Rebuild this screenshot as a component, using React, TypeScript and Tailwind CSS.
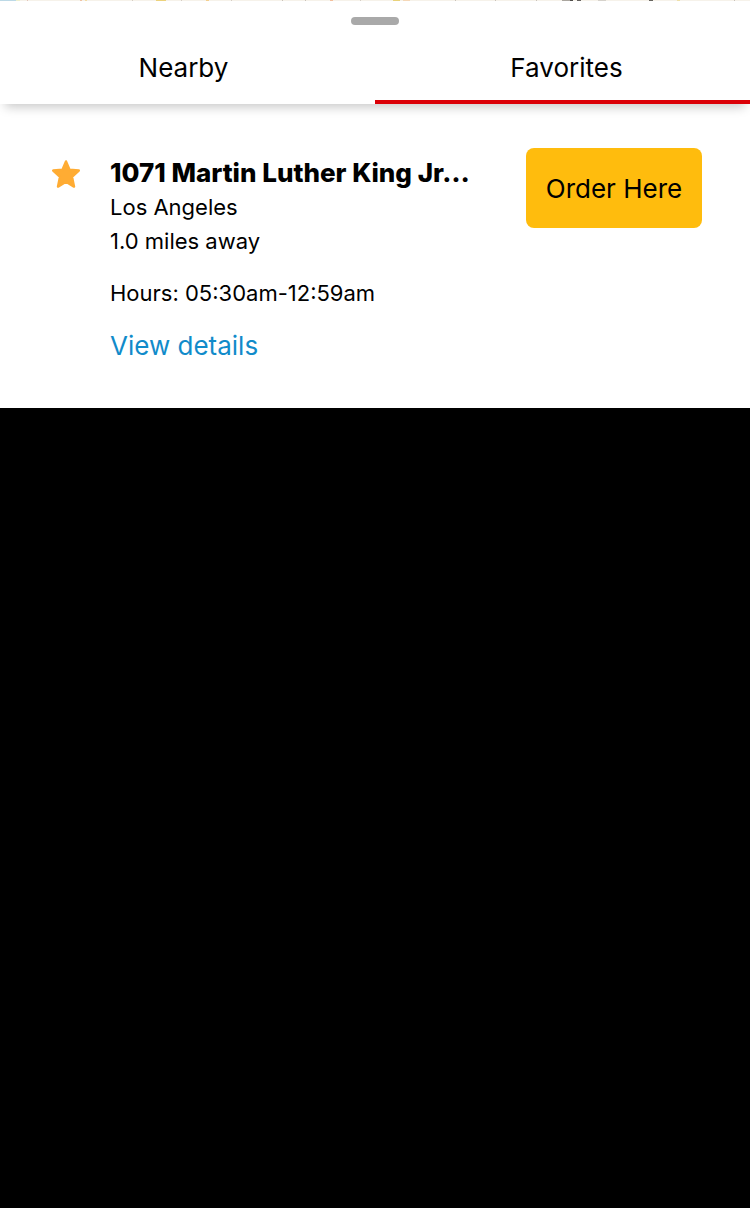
const mapMarks = [
  { x: 0, w: 16, fill: "#bcd9e6" },
  { x: 16, w: 4, fill: "#eef0cf" },
  { x: 27, w: 1, fill: "#e3c3b8" },
  { x: 80, w: 2, fill: "#f0c3a4" },
  { x: 85, w: 2, fill: "#f3dca6" },
  { x: 132, w: 1, fill: "#d5cdc4" },
  { x: 156, w: 10, fill: "#ecd27c" },
  { x: 181, w: 1, fill: "#d5cdc4" },
  { x: 206, w: 3, fill: "#f4cf8e" },
  { x: 231, w: 1, fill: "#d5cdc4" },
  { x: 282, w: 1, fill: "#c9c2ba" },
  { x: 305, w: 1, fill: "#c9c2ba" },
  { x: 330, w: 3, fill: "#f3bf9d" },
  { x: 360, w: 1, fill: "#d5cdc4" },
  { x: 393, w: 7, fill: "#e9d27a" },
  { x: 403, w: 7, fill: "#f5d8b8" },
  { x: 455, w: 1, fill: "#c9c2ba" },
  { x: 495, w: 1, fill: "#c9c2ba" },
  { x: 536, w: 1, fill: "#c9c2ba" },
  { x: 562, w: 8, fill: "#aaa69f" },
  { x: 570, w: 3, fill: "#4f4d4a" },
  { x: 577, w: 4, fill: "#65625f" },
  { x: 598, w: 8, fill: "#d6d2cb" },
  { x: 649, w: 4, fill: "#67645f" },
  { x: 677, w: 3, fill: "#eee0a8" },
  { x: 734, w: 1, fill: "#c9c2ba" },
];

function MapEdge() {
  return (
    <svg className="block h-px w-full" viewBox="0 0 750 1" preserveAspectRatio="none" aria-hidden="true">
      <rect width="750" height="1" fill="#f6f2ea" />
      {mapMarks.map((m) => (
        <rect key={m.x} x={m.x} width={m.w} height="1" fill={m.fill} />
      ))}
    </svg>
  );
}

function Star() {
  return (
    <svg className="block size-7" viewBox="0 0 28 28" aria-hidden="true">
      <path
        d="M14 1.4 L17.5 9.7 L26.8 10.5 L20 16.8 L22 26.6 L14 21.8 L6 26.6 L8 16.8 L1.2 10.5 L10.5 9.7 Z"
        fill="#ffac33"
        stroke="#ffac33"
        strokeWidth="2.4"
        strokeLinejoin="round"
      />
    </svg>
  );
}

function Tab({ label, selected }: { label: string; selected: boolean }) {
  return (
    <button
      type="button"
      role="tab"
      aria-selected={selected}
      className={
        selected
          ? "flex-1 border-b-4 border-[#db0007] pt-[14px] pb-[14px] pl-2 text-[26px] leading-9"
          : "flex-1 border-b-4 border-transparent pt-[14px] pb-[14px] pr-2 text-[26px] leading-9"
      }
    >
      {label}
    </button>
  );
}

export default function App() {
  return (
    <div className="min-h-screen bg-black font-[Inter,sans-serif] text-black">
      <MapEdge />
      <main className="bg-white">
        <header className="relative bg-white pt-4 shadow-[0_8px_10px_-5px_rgba(0,0,0,0.22)]">
          <div className="mx-auto mb-[11px] h-2 w-12 rounded-full bg-[#a9a9a9]" />
          <div role="tablist" className="flex">
            <Tab label="Nearby" selected={false} />
            <Tab label="Favorites" selected />
          </div>
        </header>

        <article className="flex items-start px-12 pt-11 pb-11">
          <div className="mr-[30px] ml-1 pt-3">
            <Star />
          </div>
          <div className="min-w-0 flex-1 pt-2">
            <h2 className="whitespace-nowrap text-[26px] leading-[34px] font-extrabold">
              1071 Martin Luther King Jr…
            </h2>
            <p className="text-[22px] leading-[34px]">Los Angeles</p>
            <p className="text-[22px] leading-[34px]">1.0 miles away</p>
            <p className="mt-[18px] text-[22px] leading-[34px]">Hours: 05:30am-12:59am</p>
            <a href="#details" className="mt-[18px] block w-fit text-[26px] leading-9 text-[#118bca]">
              View details
            </a>
          </div>
          <button
            type="button"
            className="h-20 w-44 shrink-0 rounded-lg bg-[#ffbc0d] pt-0.5 text-[26px] leading-9"
          >
            Order Here
          </button>
        </article>
      </main>
    </div>
  );
}
